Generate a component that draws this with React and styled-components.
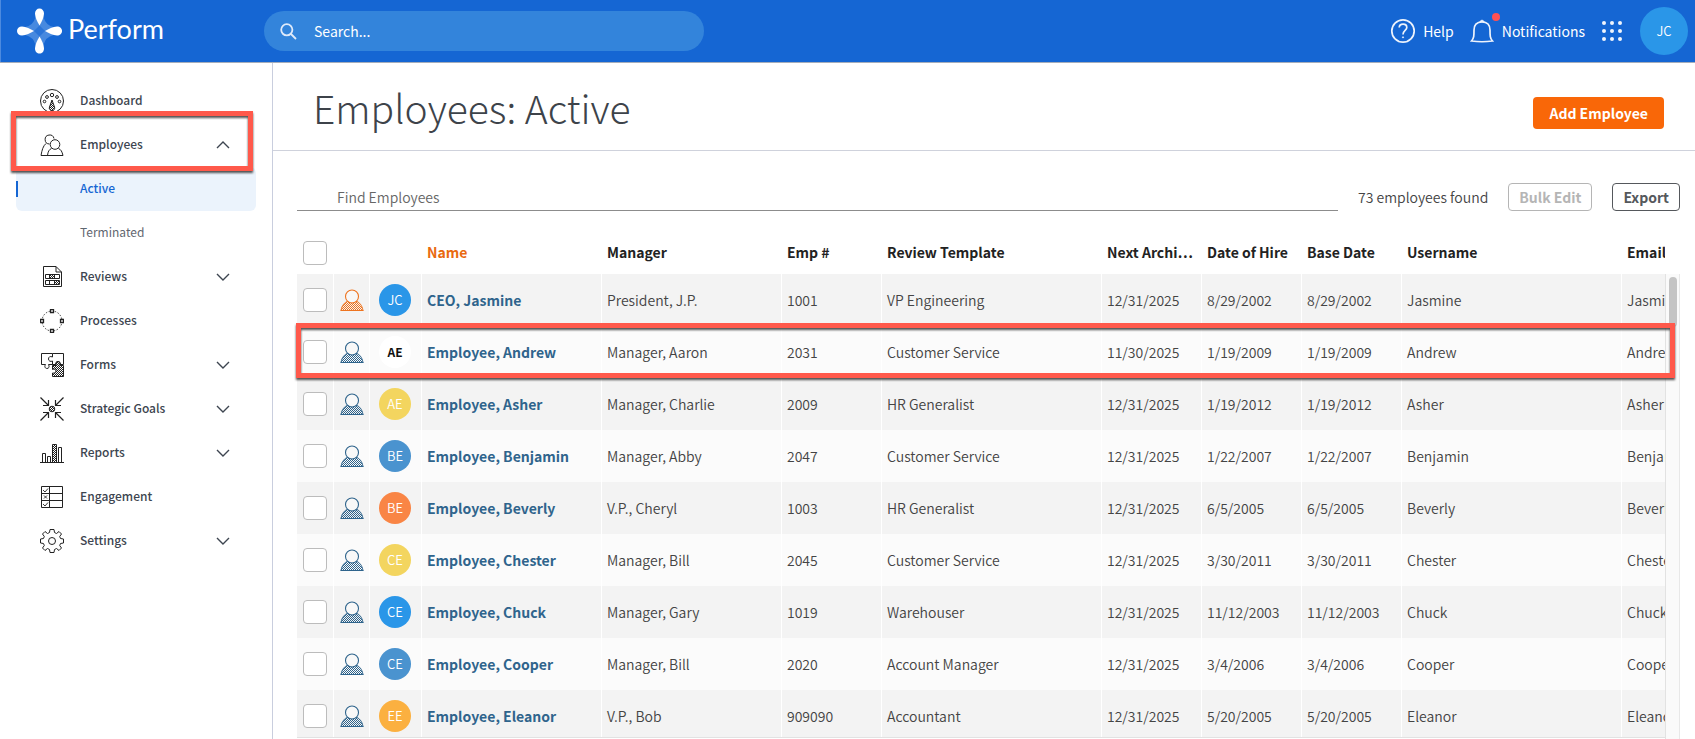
import React from "react";
import styled, { createGlobalStyle, css } from "styled-components";

const GlobalStyle = createGlobalStyle`
  *, *::before, *::after { box-sizing: border-box; }
  html, body, #root { height: 100%; }
  body {
    margin: 0;
    background: #fff;
    color: #444;
    font-family: "Noto Sans CJK KR", "Noto Sans", sans-serif;
    font-size: 14px;
    line-height: 20px;
    overflow: hidden;
  }
  button, input { font: inherit; }
  a { text-decoration: none; color: inherit; }
  button { cursor: pointer; }
`;

/* ---------- shell ---------- */

const Shell = styled.div`
  display: flex;
  flex-direction: column;
  height: 100vh;
`;

const TopBar = styled.header`
  display: flex;
  align-items: center;
  flex: none;
  height: 63px;
  padding: 0 7px 0 16px;
  background: #1566d3;
  border-bottom: 1px solid #a5adba;
  box-shadow: inset 1px 0 #4c8adf;
  color: #fff;
`;

const Brand = styled.a`
  display: flex;
  align-items: center;
  gap: 5px;
  width: 248px;
  font-family: Lato, "Noto Sans", sans-serif;
  font-size: 27px;
  line-height: 32px;

  span { padding-bottom: 4px; }
`;

const SearchBox = styled.label`
  display: flex;
  align-items: center;
  gap: 17px;
  width: 440px;
  height: 40px;
  padding: 0 16px;
  border-radius: 20px;
  background: #3384db;

  input {
    flex: 1;
    min-width: 0;
    padding: 0;
    border: 0;
    outline: 0;
    background: none;
    color: #fff;
    font-size: 14px;
    line-height: 20px;
    font-weight: 400;
  }
  input::placeholder { color: #fff; opacity: 1; }
`;

const TopActions = styled.div`
  display: flex;
  align-items: center;
  margin-left: auto;
`;

const TopButton = styled.button`
  display: flex;
  align-items: center;
  gap: 8px;
  margin-right: ${(p) => p.$after || 16}px;
  padding: 0;
  border: 0;
  background: none;
  color: #fff;
  font-size: 14px;
  line-height: 20px;
  font-weight: 400;

  svg { overflow: visible; }
`;

const Body = styled.div`
  display: flex;
  flex: 1;
  min-height: 0;
`;

/* ---------- sidebar ---------- */

const Sidebar = styled.nav`
  flex: none;
  width: 273px;
  padding: 16px 16px 0;
  border-right: 1px solid #c9cede;
`;

const NavItem = styled.a`
  position: relative;
  display: flex;
  align-items: center;
  gap: 16px;
  height: 44px;
  padding: 0 26px 0 24px;
  color: #3d4550;
  font-size: 12px;
  font-weight: 500;

  span { flex: 1; padding-bottom: 2px; }
`;

const SubItem = styled.a`
  position: relative;
  display: flex;
  align-items: center;
  height: 44px;
  padding: 0 0 2px 64px;
  border-radius: 6px;
  color: #5f6670;
  font-size: 12px;

  ${(p) =>
    p.$active &&
    css`
      background: #ebf3fc;
      color: #1566d3;
      font-weight: 500;

      &::before {
        content: "";
        position: absolute;
        left: 0;
        top: 14px;
        width: 2px;
        height: 16px;
        background: #1566d3;
      }
    `}
`;

const Callout = styled.div`
  position: absolute;
  z-index: 3;
  top: ${(p) => p.$top}px;
  left: ${(p) => p.$left}px;
  right: ${(p) => p.$right}px;
  height: ${(p) => p.$height}px;
  border: 5px solid #ff594b;
  filter: drop-shadow(0 2px 1px rgba(50, 50, 50, 0.85));
  pointer-events: none;
`;

/* ---------- main ---------- */

const Main = styled.main`
  display: flex;
  flex-direction: column;
  flex: 1;
  min-width: 0;
`;

const PageHeader = styled.div`
  display: flex;
  align-items: center;
  justify-content: space-between;
  flex: none;
  height: 88px;
  padding: 12px 31px 0 40px;
  border-bottom: 1px solid #cfd2dc;
`;

const Title = styled.h1`
  margin: 0;
  padding-bottom: 12px;
  color: #3d434a;
  font-size: 39px;
  line-height: 48px;
  font-weight: 300;
`;

const PrimaryButton = styled.button`
  height: 32px;
  padding: 0 16px;
  border: 0;
  border-radius: 4px;
  background: #f96708;
  color: #fff;
  font-size: 14px;
  line-height: 20px;
  font-weight: 700;
`;

const Toolbar = styled.div`
  display: flex;
  align-items: flex-end;
  flex: none;
  gap: 20px;
  height: 60px;
  padding: 0 15px 0 24px;
`;

const FindInput = styled.input`
  flex: 1;
  min-width: 0;
  height: 40px;
  padding: 12px 40px 0;
  border: 0;
  border-bottom: 1px solid #8c8c8c;
  outline: 0;
  color: #333;
  font-weight: 350;

  &::placeholder { color: #666; opacity: 1; }
`;

const Count = styled.span`
  padding-bottom: 4px;
  font-weight: 350;
`;

const OutlineButton = styled.button`
  height: 28px;
  padding: 0 10px;
  border: 1px solid #55585c;
  border-radius: 4px;
  background: #fff;
  color: #55585c;
  font-weight: 700;

  &:disabled { border-color: #b5b5b5; color: #b5b5b5; }
`;

const TableArea = styled.div`
  position: relative;
  display: flex;
  flex: 1;
  min-height: 0;
  margin: 21px 15px 0 24px;
`;

const Viewport = styled.div`
  flex: 1;
  min-width: 0;
  margin-bottom: 1px;
  border-bottom: 1px solid #e2e2e2;
  overflow: auto;
  scrollbar-width: none;
`;

const ScrollTrack = styled.div`
  flex: none;
  width: 15px;
  margin-top: 42px;
  padding: 3px 3px 0;
  border-left: 1px solid #e2e2e2;
  border-right: 1px solid #e8e8e8;
  background: #fafafa;
`;

const ScrollThumb = styled.div`
  height: 50px;
  width: 8px;
  border-radius: 4px;
  background: #c4c4c4;
`;

const Table = styled.table`
  width: 100%;
  min-width: 1545px;
  table-layout: fixed;
  border-collapse: separate;
  border-spacing: 0;
`;

const HeadCell = styled.th`
  position: sticky;
  top: 0;
  z-index: 1;
  height: 42px;
  padding: 0 5px;
  background: #fff;
  color: ${(p) => (p.$sorted ? "#e96a10" : "#222")};
  font-weight: 700;
  text-align: left;
  white-space: nowrap;
  overflow: hidden;

  &[scope] { padding-bottom: 2px; }
`;

const Row = styled.tr`
  background: #fbfbfb;
  &:nth-child(odd) { background: #f3f3f3; }
`;

const Cell = styled.td`
  height: 52px;
  padding: 0 5px;
  border-right: 1px solid #fff;
  font-weight: 350;
  white-space: nowrap;
  overflow: hidden;
`;

const Tick = styled.input.attrs({ type: "checkbox" })`
  display: block;
  appearance: none;
  width: 24px;
  height: 24px;
  margin: 0 0 0 1px;
  border: 1px solid #bcbcbc;
  border-radius: 4px;
  background: #fff;
  &:checked { background: #1566d3; }
`;

const Avatar = styled.span`
  display: flex;
  align-items: center;
  justify-content: center;
  width: ${(p) => p.$size || 32}px;
  height: ${(p) => p.$size || 32}px;
  margin-left: ${(p) => (p.$size ? 0 : 4)}px;
  border-radius: 50%;
  background: ${(p) => p.$bg};
  color: ${(p) => (p.$photo ? "#111" : "#fff")};
  font-size: ${(p) => (p.$photo ? 12 : 13)}px;
  line-height: 16px;
  font-weight: ${(p) => (p.$photo ? 700 : 350)};
`;

const PersonBadge = styled.span`
  display: block;
  padding-left: 1px;

  svg { display: block; }
`;

const NameLink = styled.a`
  color: #2f648c;
  font-weight: 700;
`;

const PatternDefs = styled.svg`
  position: absolute;
`;

/* ---------- drawings ---------- */

function Hatches() {
  const inks = { dark: "#222", blue: "#2f648c", orange: "#ee7420" };
  return (
    <PatternDefs width="0" height="0" aria-hidden="true">
      <defs>
        {Object.entries(inks).map(([id, ink]) => (
          <pattern key={id} id={`hatch-${id}`} width="2" height="2" patternUnits="userSpaceOnUse">
            <rect width="1" height="1" fill={ink} />
            <rect x="1" y="1" width="1" height="1" fill={ink} />
          </pattern>
        ))}
      </defs>
    </PatternDefs>
  );
}

function Logo() {
  const petal = "M23 17.500 C21 14 18.500 9.500 18.500 5.500 C18.500 2.500 20.500 .5 23 .5 C25.500 .5 27.500 2.500 27.500 5.500 C27.500 9.500 25 14 23 17.500Z";
  return (
    <svg width="47" height="46" viewBox="0 0 46 46" aria-hidden="true">
      <path d="M19 9 Q17 17 9 19 V27 Q17 29 19 37 H27 Q29 29 37 27 V19 Q29 17 27 9Z" fill="#4789df" />
      <path d="M23 17.500 L28.500 23 L23 28.500 L17.500 23Z" fill="#2a74d8" />
      {[0, 90, 180, 270].map((a) => (
        <path key={a} d={petal} fill="#fff" transform={`rotate(${a} 23 23)`} />
      ))}
    </svg>
  );
}

function PersonIcon({ tone = "blue" }) {
  const ink = tone === "orange" ? "#ee7420" : "#2f648c";
  return (
    <svg width="24" height="24" viewBox="0 0 24 24" fill="none" stroke={ink} aria-hidden="true">
      <path d="M1 22.500 C2 17 4.500 14.500 8 13 Q12 16.500 16 13 C19.500 14.500 22 17 23 22.500Z" fill={`url(#hatch-${tone})`} />
      <path d="M.5 22.500H23.500" />
      <circle cx="12" cy="8.500" r="6.500" fill="#f8f8f8" strokeWidth="1.100" />
    </svg>
  );
}

const navDrawings = {
  dashboard: (
    <>
      <circle cx="12" cy="12" r="11.500" />
      <circle cx="12" cy="6" r="1.700" />
      <circle cx="7" cy="8" r="1.400" />
      <circle cx="17" cy="8" r="1.400" />
      <circle cx="4.500" cy="12.500" r="1.300" />
      <circle cx="19.500" cy="12.500" r="1.300" />
      <path d="M12 11 L14.500 18 A2.700 2.700 0 1 1 9.500 18Z" fill="url(#hatch-dark)" />
    </>
  ),
  employees: (
    <>
      <path d="M6 10.500 C3 13 2 17 1 22.500 H23 C22 18.500 21 16.500 18.500 15.500" />
      <path d="M7.500 22.500 C8 18.500 9 16.500 11.500 15.500" />
      <path d="M9.500 11 A4.500 4.500 0 1 1 14 5.500" />
      <circle cx="15" cy="11.500" r="4.800" />
    </>
  ),
  reviews: (
    <>
      <path d="M3.500 1.500 H16 L21.500 7 V21.500 H3.500Z M16 1.500 V7 H21.500" />
      <path d="M5.500 9.500 H19.500 V13.500 H5.500Z M5.500 15.500 H19.500 V19.500 H5.500Z M9.500 9.500V13.500M14.500 9.500V13.500M9.500 15.500V19.500M14.500 15.500V19.500" />
      <path d="M10 10h4v3h-4z M15 16h4v3h-4z" fill="url(#hatch-dark)" stroke="none" />
    </>
  ),
  processes: (
    <>
      <circle cx="12" cy="12" r="10" strokeDasharray="1.500 1.600" strokeWidth=".9" />
      <path d="M10.500 .5h3v3h-3z M10.500 20.500h3v3h-3z M.5 10.500h3v3h-3z M20.500 10.500h3v3h-3z" fill="#fff" strokeWidth="1.300" />
    </>
  ),
  forms: (
    <>
      <path d="M12.500 8 V11.500 H8.500 C10 14 8.500 15.500 7 15.500 S4 14 5.500 11.500 H1.500 V.5 H12.500 V4 C10 2.800 8.500 4 8.500 6 S10.500 9 12.500 8Z" />
      <path d="M12.500 .5 H23.500 V11.500 H20 C20.500 9.500 19.500 8.500 18 8.500 S15.500 9.500 16 11.500 H12.500 V8" />
      <path d="M12.500 12.500 H16 C15 10 16.500 8.500 18 8.500 S21 10 20 12.500 H23.500 V23.500 H12.500 V20 C15 20.500 16 19.500 16 18 S14.500 15.500 12.500 16.500Z" fill="url(#hatch-dark)" />
    </>
  ),
  goals: (
    <>
      <path d="M.5 .5 L8.500 8.500 M23.500 .5 L15.500 8.500 M.5 23.500 L8.500 15.500 M23.500 23.500 L15.500 15.500" strokeWidth="1.200" />
      <path d="M8.500 3 V8.500 H3 M15.500 3 V8.500 H21 M8.500 21 V15.500 H3 M15.500 21 V15.500 H21" strokeWidth="1.200" />
      <circle cx="12" cy="12" r="2.800" fill="url(#hatch-dark)" />
    </>
  ),
  reports: (
    <>
      <path d="M0 21.500 H24" />
      <path d="M2.500 21.500 V12.500 H5.500 V21.500 M7.500 21.500 V15.500 H10.500 V21.500 M18.500 21.500 V6.500 H21.500 V21.500" />
      <path d="M12.500 21.500 V3.500 H16.500 V21.500" fill="url(#hatch-dark)" />
    </>
  ),
  engagement: (
    <>
      <path d="M1.500 1.500 H22.500 V22.500 H1.500Z M1.500 8.500 H22.500 M1.500 15.500 H22.500 M9.500 1.500 V22.500" />
      <path d="M3 5 L5 7 L8 3.500 M3 19 L5 21 L8 17.500 M4 10.500 L7 13.500 M7 10.500 L4 13.500" strokeWidth=".9" />
    </>
  ),
  settings: (
    <>
      <circle cx="12" cy="12" r="3.500" />
      <path d="M10 .5 H14 L14.500 3.500 L16.500 4.500 L19 2.500 L21.500 5 L19.700 7.500 L20.500 9.500 L23.500 10 V14 L20.500 14.500 L19.700 16.500 L21.500 19 L19 21.500 L16.500 19.500 L14.500 20.500 L14 23.500 H10 L9.500 20.500 L7.500 19.500 L5 21.500 L2.500 19 L4.300 16.500 L3.500 14.500 L.5 14 V10 L3.500 9.500 L4.300 7.500 L2.500 5 L5 2.500 L7.500 4.500 L9.500 3.500Z" strokeLinejoin="round" />
    </>
  ),
};

function NavIcon({ name }) {
  return (
    <svg width="24" height="24" viewBox="0 0 24 24" fill="none" stroke="#222" aria-hidden="true">
      {navDrawings[name]}
    </svg>
  );
}

function Chevron({ up }) {
  return (
    <svg width="14" height="8" viewBox="0 0 14 8" fill="none" stroke="#3d4550" strokeWidth="1.400" aria-hidden="true">
      <path d={up ? "M1 7 L7 1 L13 7" : "M1 1 L7 7 L13 1"} />
    </svg>
  );
}

/* ---------- data ---------- */

const navigation = [
  { label: "Dashboard", icon: "dashboard" },
  {
    label: "Employees",
    icon: "employees",
    open: true,
    marked: true,
    items: [{ label: "Active", active: true }, { label: "Terminated" }],
  },
  { label: "Reviews", icon: "reviews", expandable: true },
  { label: "Processes", icon: "processes" },
  { label: "Forms", icon: "forms", expandable: true },
  { label: "Strategic Goals", icon: "goals", expandable: true },
  { label: "Reports", icon: "reports", expandable: true },
  { label: "Engagement", icon: "engagement" },
  { label: "Settings", icon: "settings", expandable: true },
];

const columnWidths = [37, 36, 52, 180, 180, 100, 220, 100, 100, 100, 220];

const headings = [
  "Name", "Manager", "Emp #", "Review Template", "Next Archi…",
  "Date of Hire", "Base Date", "Username", "Email",
];

const employees = [
  ["JC", "#2a96e8", "CEO, Jasmine", "President, J.P.", "1001", "VP Engineering", "12/31/2025", "8/29/2002", "Jasmine"],
  ["AE", "#ffffff", "Employee, Andrew", "Manager, Aaron", "2031", "Customer Service", "11/30/2025", "1/19/2009", "Andrew"],
  ["AE", "#f3d55f", "Employee, Asher", "Manager, Charlie", "2009", "HR Generalist", "12/31/2025", "1/19/2012", "Asher"],
  ["BE", "#4a93cf", "Employee, Benjamin", "Manager, Abby", "2047", "Customer Service", "12/31/2025", "1/22/2007", "Benjamin"],
  ["BE", "#f98545", "Employee, Beverly", "V.P., Cheryl", "1003", "HR Generalist", "12/31/2025", "6/5/2005", "Beverly"],
  ["CE", "#f3d55f", "Employee, Chester", "Manager, Bill", "2045", "Customer Service", "12/31/2025", "3/30/2011", "Chester"],
  ["CE", "#2a96e8", "Employee, Chuck", "Manager, Gary", "1019", "Warehouser", "12/31/2025", "11/12/2003", "Chuck"],
  ["CE", "#4a93cf", "Employee, Cooper", "Manager, Bill", "2020", "Account Manager", "12/31/2025", "3/4/2006", "Cooper"],
  ["EE", "#fbb040", "Employee, Eleanor", "V.P., Bob", "909090", "Accountant", "12/31/2025", "5/20/2005", "Eleanor"],
];

/* ---------- page ---------- */

function Header() {
  return (
    <TopBar>
      <Brand href="#">
        <Logo />
        <span>Perform</span>
      </Brand>
      <SearchBox>
        <svg width="17" height="17" viewBox="0 0 17 17" fill="none" stroke="#dfeafa" strokeWidth="1.800" aria-hidden="true">
          <circle cx="6.800" cy="6.800" r="5.600" />
          <path d="M11 11 L16 16" />
        </svg>
        <input type="text" placeholder="Search..." aria-label="Search" />
      </SearchBox>
      <TopActions>
        <TopButton type="button">
          <svg width="24" height="24" viewBox="0 0 24 24" fill="none" stroke="#edf3fc" strokeWidth="1.700" aria-hidden="true">
            <circle cx="12" cy="12" r="11.200" />
            <path d="M8.200 8.500 C8.500 4 15.800 4.200 15.800 8.500 C15.800 11.500 12 11.500 12 15.500" />
            <circle cx="12" cy="18.300" r=".6" fill="#edf3fc" strokeWidth=".8" />
          </svg>
          Help
        </TopButton>
        <TopButton type="button" $after={17}>
          <svg width="24" height="24" viewBox="0 0 24 24" fill="none" stroke="#edf3fc" strokeWidth="1.700" aria-hidden="true">
            <path d="M1.500 22 C4 19 4 17 4 11 C4 6 6.500 3 12 3 S20 6 20 11 C20 17 20 19 22.500 22 Q12 23.500 1.500 22Z" />
            <path d="M9.500 3 Q12 -1 14.500 3Z" fill="#edf3fc" strokeWidth=".5" />
            <circle cx="26" cy="-2" r="4" fill="#ff5052" stroke="none" />
          </svg>
          Notifications
        </TopButton>
        <TopButton type="button" aria-label="Apps" $after={18}>
          <svg width="20" height="20" viewBox="0 0 20 20" fill="#f0f5fd" aria-hidden="true">
            {[2, 10, 18].map((y) => [2, 10, 18].map((x) => <circle key={`${x}-${y}`} cx={x} cy={y} r="2" />))}
          </svg>
        </TopButton>
        <Avatar $size={48} $bg="#2a96e8">JC</Avatar>
      </TopActions>
    </TopBar>
  );
}

function Navigation() {
  return (
    <Sidebar>
      {navigation.map((n) => (
        <React.Fragment key={n.label}>
          <NavItem href="#">
            <NavIcon name={n.icon} />
            <span>{n.label}</span>
            {(n.expandable || n.open) && <Chevron up={n.open} />}
            {n.marked && <Callout $top={-12} $left={-5} $right={3} $height={60} />}
          </NavItem>
          {n.items?.map((s) => (
            <SubItem key={s.label} href="#" $active={s.active}>{s.label}</SubItem>
          ))}
        </React.Fragment>
      ))}
    </Sidebar>
  );
}

function EmployeeTable() {
  return (
    <TableArea>
      <Viewport>
        <Table>
          <colgroup>
            {columnWidths.map((w, i) => <col key={i} width={w} />)}
            <col />
          </colgroup>
          <thead>
            <tr>
              <HeadCell><Tick aria-label="Select all" /></HeadCell>
              <HeadCell />
              <HeadCell />
              {headings.map((h) => (
                <HeadCell key={h} scope="col" $sorted={h === "Name"}>{h}</HeadCell>
              ))}
            </tr>
          </thead>
          <tbody>
            {employees.map(([initials, bg, name, manager, id, template, archive, hired, user], i) => (
              <Row key={name}>
                <Cell><Tick aria-label={`Select ${name}`} /></Cell>
                <Cell><PersonBadge><PersonIcon tone={i === 0 ? "orange" : "blue"} /></PersonBadge></Cell>
                <Cell><Avatar $bg={bg} $photo={i === 1}>{initials}</Avatar></Cell>
                <Cell><NameLink href="#">{name}</NameLink></Cell>
                <Cell>{manager}</Cell>
                <Cell>{id}</Cell>
                <Cell>{template}</Cell>
                <Cell>{archive}</Cell>
                <Cell>{hired}</Cell>
                <Cell>{hired}</Cell>
                <Cell>{user}</Cell>
                <Cell>{user}</Cell>
              </Row>
            ))}
          </tbody>
        </Table>
      </Viewport>
      <ScrollTrack><ScrollThumb /></ScrollTrack>
      <Callout $top={91} $left={-1} $right={5} $height={55} />
    </TableArea>
  );
}

export default function App() {
  return (
    <Shell>
      <GlobalStyle />
      <Hatches />
      <Header />
      <Body>
        <Navigation />
        <Main>
          <PageHeader>
            <Title>Employees: Active</Title>
            <PrimaryButton type="button">Add Employee</PrimaryButton>
          </PageHeader>
          <Toolbar>
            <FindInput type="text" placeholder="Find Employees" aria-label="Find Employees" />
            <Count>73 employees found</Count>
            <OutlineButton type="button" disabled>Bulk Edit</OutlineButton>
            <OutlineButton type="button">Export</OutlineButton>
          </Toolbar>
          <EmployeeTable />
        </Main>
      </Body>
    </Shell>
  );
}
